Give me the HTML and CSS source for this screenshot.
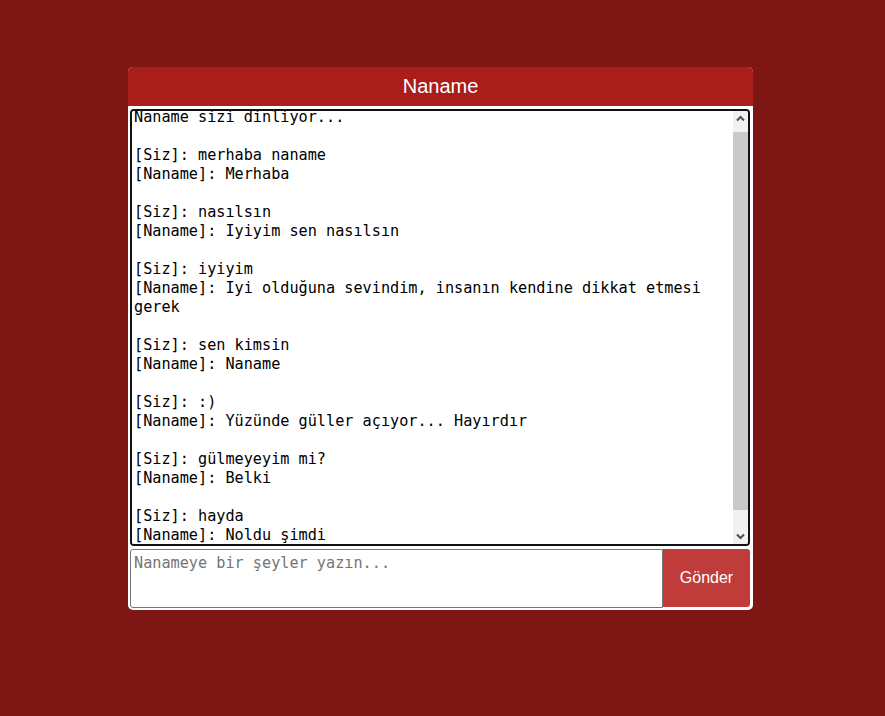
FILE: index.html
```html
<!DOCTYPE html>
<html lang="tr">
<head>
<meta charset="utf-8">
<title>Naname</title>
<link rel="stylesheet" href="styles.css">
</head>
<body>
<div class="app">
  <div class="header">Naname</div>
  <div class="main">
    <div class="log-box">
      <textarea class="log" readonly>Naname sizi dinliyor...

[Siz]: merhaba naname
[Naname]: Merhaba

[Siz]: nasılsın
[Naname]: Iyiyim sen nasılsın

[Siz]: iyiyim
[Naname]: Iyi olduğuna sevindim, insanın kendine dikkat etmesi gerek

[Siz]: sen kimsin
[Naname]: Naname

[Siz]: :)
[Naname]: Yüzünde güller açıyor... Hayırdır

[Siz]: gülmeyeyim mi?
[Naname]: Belki

[Siz]: hayda
[Naname]: Noldu şimdi
</textarea>
      <div class="scrollbar">
        <div class="sb-btn">
          <svg width="15" height="15" viewBox="0 0 15 15"><path d="M4 9.5 L7.5 6 L11 9.5" stroke="#505050" stroke-width="2" fill="none"/></svg>
        </div>
        <div class="sb-track"><div class="sb-thumb"></div></div>
        <div class="sb-btn">
          <svg width="15" height="15" viewBox="0 0 15 15"><path d="M4 5.5 L7.5 9 L11 5.5" stroke="#505050" stroke-width="2" fill="none"/></svg>
        </div>
      </div>
    </div>
    <div class="compose">
      <textarea class="input" placeholder="Nanameye bir şeyler yazın..."></textarea>
      <button class="send">Gönder</button>
    </div>
  </div>
</div>
<script src="script.js"></script>
</body>
</html>
```

FILE: styles.css
```css
html, body {
  margin: 0;
  padding: 0;
}
body {
  background: #7e1614;
  font-family: "Liberation Sans", Arial, sans-serif;
  height: 716px;
  overflow: hidden;
}
.app {
  width: 625px;
  margin: 67px 0 0 128px;
  background: #fff;
  border-radius: 5px;
}
.header {
  height: 39px;
  background: #a91d1b;
  border-radius: 5px 5px 0 0;
  color: #fff;
  font-size: 20px;
  display: flex;
  align-items: center;
  justify-content: center;
}
.main {
  padding: 3px 3px 2px 2px;
}
.log-box {
  display: flex;
  box-sizing: border-box;
  width: 620px;
  height: 437px;
  border: 2px solid #111;
  border-radius: 4px;
  overflow: hidden;
  background: #fff;
}
.log {
  flex: 1;
  display: block;
  box-sizing: border-box;
  height: 100%;
  margin: 0;
  border: none;
  padding: 2px;
  resize: none;
  outline: none;
  overflow: hidden;
  font-family: "DejaVu Sans Mono", monospace;
  font-size: 15.2px;
  line-height: 19px;
  color: #000;
  background: #fff;
}
.scrollbar {
  width: 15px;
  flex: none;
  display: flex;
  flex-direction: column;
  background: #f1f1f1;
}
.sb-btn {
  height: 15px;
  flex: none;
}
.sb-btn svg {
  display: block;
}
.sb-track {
  flex: 1;
  display: flex;
  flex-direction: column;
  padding: 6px 0 19px;
}
.sb-thumb {
  flex: 1;
  background: #c9c9c9;
}
.compose {
  display: flex;
  margin-top: 3px;
  height: 59px;
}
.input {
  box-sizing: border-box;
  width: 533px;
  height: 59px;
  margin: 0;
  border: 1px solid #767676;
  border-radius: 3px 0 0 3px;
  padding: 4px 3px;
  resize: none;
  outline: none;
  font-family: "DejaVu Sans Mono", monospace;
  font-size: 15.2px;
  line-height: 19px;
  color: #111;
}
.input::placeholder {
  color: #757575;
}
.send {
  width: 87px;
  height: 58px;
  margin: 0;
  border: none;
  border-radius: 0 3px 3px 0;
  background: #c03c3a;
  color: #fff;
  font-family: "Liberation Sans", Arial, sans-serif;
  font-size: 16px;
  padding: 0;
}
```

FILE: script.js
```js
document.querySelector('.log').scrollTop = 5;
```
